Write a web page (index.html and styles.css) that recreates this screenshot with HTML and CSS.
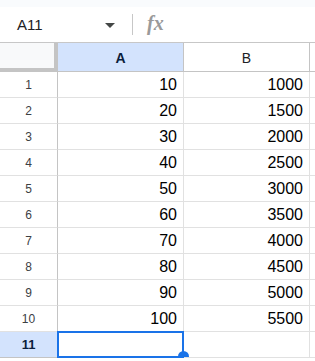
FILE: index.html
```html
<!DOCTYPE html>
<html>

<head>
    <title>Sheet</title>
    <meta charset="utf-8" />
    <link rel="stylesheet" href="styles.css">
</head>

<body>
    <div class="topStrip"></div>

    <div class="formulaBar">
        <div class="nameBox">A11</div>
        <div class="dropArrow"></div>
        <div class="sep"></div>
        <div class="fx">fx</div>
    </div>

    <div id="grid" class="grid">
        <div class="corner"></div>
        <div class="colHead active">A</div>
        <div class="colHead">B</div>
        <div class="colHead rest"></div>
    </div>

    <script>
        // fill the rows, A = n*10, B = 500 + n*500
        const grid = document.getElementById('grid');
        for (let i = 1; i <= 11; i++) {
            const rowHead = document.createElement('div');
            rowHead.className = 'rowHead' + (i === 11 ? ' active' : '');
            rowHead.textContent = i;
            grid.appendChild(rowHead);

            const a = document.createElement('div');
            a.className = 'cell' + (i === 11 ? ' selected' : '');
            a.textContent = i <= 10 ? i * 10 : '';
            grid.appendChild(a);

            const b = document.createElement('div');
            b.className = 'cell';
            b.textContent = i <= 10 ? 500 + i * 500 : '';
            grid.appendChild(b);

            const rest = document.createElement('div');
            rest.className = 'cell rest';
            grid.appendChild(rest);
        }
    </script>
</body>

</html>
```

FILE: styles.css
```css
body {
    margin: 0;
    padding: 0;
    overflow: hidden;
    font-family: "Liberation Sans", Arial, sans-serif;
    color: #202124;
    background-color: #fff;
}

.topStrip {
    height: 7px;
    background-color: #f9fbfd;
}

.formulaBar {
    height: 35px;
    display: flex;
    align-items: center;
    border-bottom: 1px solid #c7c7c7;
}

.nameBox {
    width: 88px;
    padding-left: 17px;
    font-size: 15px;
    color: #202124;
}

.dropArrow {
    width: 0;
    height: 0;
    border-left: 5px solid transparent;
    border-right: 5px solid transparent;
    border-top: 5px solid #444746;
    margin-top: 1px;
}

.sep {
    width: 1px;
    height: 21px;
    background-color: #c7c7c7;
    margin-left: 17px;
}

.fx {
    margin-left: 14px;
    font-family: "Liberation Serif", serif;
    font-style: italic;
    font-weight: bold;
    font-size: 20px;
    color: #9a9a9a;
    margin-top: -2px;
}

/* 表格 */
.grid {
    display: grid;
    grid-template-columns: 58px 126px 126px 1fr;
    grid-auto-rows: 26px;
    grid-template-rows: 29px;
}

.corner {
    background-color: #f8f9fa;
    border-right: 4px solid #c4c4c4;
    border-bottom: 4px solid #c4c4c4;
    box-sizing: border-box;
}

.colHead {
    display: flex;
    align-items: center;
    justify-content: center;
    font-size: 14px;
    color: #202124;
    border-right: 1px solid #c4c4c4;
    border-bottom: 1px solid #c4c4c4;
    box-sizing: border-box;
    padding-top: 1px;
}

.colHead.active {
    background-color: #d3e3fd;
    font-weight: bold;
    color: #0b1e3c;
}

.rowHead {
    display: flex;
    align-items: center;
    justify-content: center;
    font-size: 12px;
    color: #3c4043;
    border-right: 1px solid #c4c4c4;
    border-bottom: 1px solid #e1e1e1;
    box-sizing: border-box;
}

.rowHead.active {
    background-color: #d3e3fd;
    font-weight: bold;
    font-size: 13px;
    color: #0b1e3c;
    border-bottom-color: #c4c4c4;
}

.cell {
    display: flex;
    align-items: center;
    justify-content: flex-end;
    padding-right: 6px;
    font-size: 16px;
    color: #000;
    border-right: 1px solid #e1e1e1;
    border-bottom: 1px solid #e1e1e1;
    box-sizing: border-box;
    position: relative;
}

.rest {
    border-right: none;
}

.cell.selected::before {
    content: "";
    position: absolute;
    left: -1px;
    top: -1px;
    right: -1px;
    bottom: -1px;
    border: 2px solid #1a73e8;
}

.cell.selected::after {
    content: "";
    position: absolute;
    right: -6px;
    bottom: -5px;
    width: 11px;
    height: 11px;
    border-radius: 50%;
    background-color: #1a73e8;
}
```
